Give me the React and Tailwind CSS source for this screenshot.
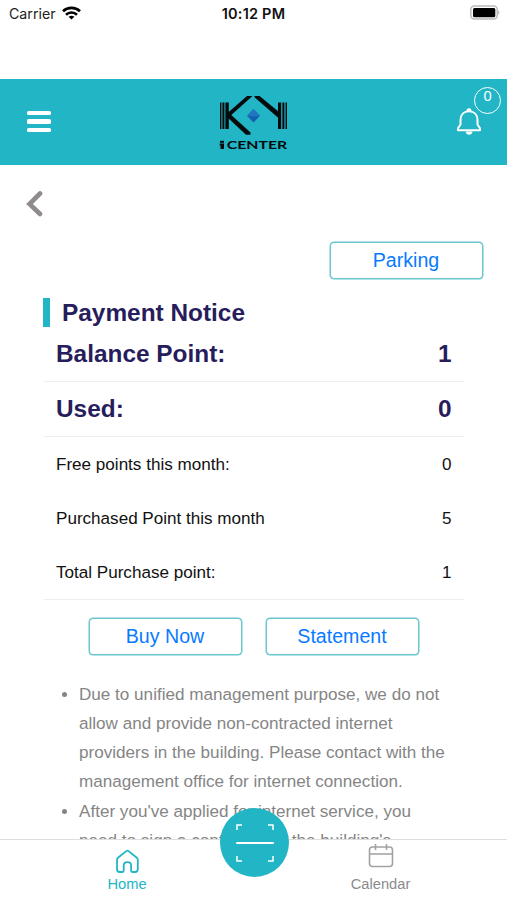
function StatusBar() {
  return (
    <div className="relative flex h-[79px] shrink-0 items-start justify-between bg-white font-['Inter',sans-serif] text-[#111]">
      <div className="flex items-center pt-[4px] pl-[9px]">
        <span className="text-[14.2px] leading-[20px] text-[#222]">Carrier</span>
        <svg className="mt-[-3px] ml-[6px]" width="19" height="14" viewBox="0 0 19 14" fill="none" stroke="#000" strokeWidth="2.6">
          <path d="M1 5.2C5.7.7 13.3.7 18 5.2" />
          <path d="M4 8.7C7 5.8 12 5.8 15 8.7" />
          <path d="M9.5 13.6 6.6 10.8Q9.5 8.5 12.4 10.8Z" fill="#000" stroke="none" />
        </svg>
      </div>
      <div className="absolute inset-x-0 top-[4px] text-center text-[14.5px] leading-[20px] font-semibold tracking-[0.2px]">10:12 PM</div>
      <svg className="mt-[5px] mr-[6px]" width="31" height="16" viewBox="0 0 31 16">
        <rect x="0.8" y="1" width="26.4" height="13" rx="3.5" fill="#fff" stroke="#bbb" strokeWidth="1.5" />
        <rect x="3" y="3" width="22.3" height="9.2" rx="1.5" fill="#000" />
        <path d="M28.3 5.3Q30.5 7.5 28.3 9.7Z" fill="#aaa" />
      </svg>
    </div>
  );
}

function Logo() {
  return (
    <svg width="70" height="58" viewBox="0 0 70 58" fill="#050b0d">
      <rect x="1" y="6.5" width="1.4" height="26.5" />
      <rect x="3.4" y="6.5" width="2" height="26.5" />
      <rect x="6.4" y="6.5" width="3.4" height="26.5" />
      <rect x="59" y="6.5" width="3.2" height="26.5" />
      <rect x="63.4" y="6.5" width="2" height="26.5" />
      <rect x="66.6" y="6.5" width="1.4" height="26.5" />
      <path d="M28 0H33.5L12.3 19 31.5 36.6V38.7H27L8 21V17.5Z" />
      <path d="M35.5 0H40.5L60 16V22.5L35.5 1.2Z" />
      <path d="M34.5 13 41 19.7 34.5 26.4 28 19.7Z" fill="#1260ad" />
      <path d="M34.5 13 41 19.7 34.5 20.5 28 19.7Z" fill="#2b83ce" opacity=".6" />
      <rect x="1" y="44.8" width="4" height="2" />
      <path d="M.7 47.6H5V53H1.5V49.4H.7Z" />
      <text x="7.8" y="53" textLength="60.4" lengthAdjust="spacingAndGlyphs" fontFamily="Lato, sans-serif" fontWeight="700" fontSize="11.3">CENTER</text>
    </svg>
  );
}

function Header() {
  return (
    <header className="flex h-[86px] shrink-0 items-start justify-between bg-[#21b5c5]">
      <div className="mt-[32px] ml-[27px] flex w-[70px] flex-col gap-[4px]">
        <span className="h-[4.4px] w-[24px] rounded-[1.5px] bg-white" />
        <span className="h-[4.4px] w-[24px] rounded-[1.5px] bg-white" />
        <span className="h-[4.4px] w-[24px] rounded-[1.5px] bg-white" />
      </div>
      <div className="mt-[17px] ml-[6px]"><Logo /></div>
      <div className="relative mt-[27px] mr-[24px] ml-[50px]">
        <svg width="28" height="32" viewBox="0 0 28 32" fill="none" stroke="#fff" strokeWidth="2" strokeLinejoin="round">
          <path d="M5.5 18.5V14C5.5 8.5 9 5.3 14 5.3S22.5 8.5 22.5 14V18.5L25 22.3V24.2H3V22.3Z" />
          <path d="M12.5 5C12.5 2.7 15.5 2.7 15.5 5" />
          <path d="M10.6 25.6H17.6Q16.8 28.8 14.1 28.8T10.6 25.6Z" fill="#fff" stroke="none" />
        </svg>
        <span className="absolute -top-[19px] left-[19px] flex h-[27px] w-[27px] justify-center rounded-full border-[1.5px] border-white font-['Liberation_Sans',sans-serif] text-[14.7px] leading-[17px] text-white">0</span>
      </div>
    </header>
  );
}

function OutlineButton({ children }) {
  return (
    <button className="flex h-[37px] w-[153px] items-center justify-center rounded-[4px] border-[1.5px] border-[#69c8cf] bg-white pb-[2px] text-[19.6px] leading-[24px] text-[#087aff] shadow-[0_0_0_0.5px_#69c8cf]">
      {children}
    </button>
  );
}

function PointRow({ label, value }) {
  return (
    <div className="flex h-[54px] items-center justify-between pt-[2px] pr-[12.5px] pl-[12px] text-[17.1px] text-[#111]">
      <span className="tracking-[-0.01px]">{label}</span>
      <span>{value}</span>
    </div>
  );
}

function BottomNav() {
  return (
    <nav className="absolute inset-x-0 bottom-0 flex h-[61px] justify-between border-t border-[#dedede] bg-white text-[14.7px] leading-[18px]">
      <div className="flex w-[254px] flex-col items-center pt-[9px] text-[#21b5c5]">
        <svg width="26" height="26" viewBox="0 0 26 26" fill="none" stroke="currentColor" strokeWidth="1.8" strokeLinejoin="round">
          <path d="M3 10.8Q3 9.6 4 8.8L12.2 2.1Q13.3 1.1 14.6 2.1L22.8 8.8Q23.8 9.6 23.8 10.8V20.3Q23.8 23 21.1 23H18.3Q17.1 23 17.1 21.8V16.5Q17.1 13.2 13.4 13.2T9.7 16.5V21.8Q9.7 23 8.5 23H5.7Q3 23 3 20.3Z" />
        </svg>
        <span>Home</span>
      </div>
      <div className="flex w-[253px] flex-col items-center pt-[3px] text-[#8b8b8b]">
        <svg width="26" height="26" viewBox="0 0 26 26" fill="none" stroke="#a0a3a3" strokeWidth="1.6">
          <rect x="1.5" y="4" width="23" height="19.5" rx="3" />
          <path d="M1.5 11H24.5M7.5 1V7M18.5 1V7" />
        </svg>
        <span className="mt-[6px]">Calendar</span>
      </div>
      <button className="absolute -top-[32px] left-[220px] flex h-[69px] w-[69px] items-center justify-center rounded-full bg-[#21b5c5]">
        <svg width="40" height="40" viewBox="0 0 40 40" fill="none" stroke="#fff" strokeWidth="1.5">
          <path d="M2 7V2H7M33 2H38V7M38 33V38H33M7 38H2V33" />
          <path d="M1.2 20H38.8" strokeWidth="2" />
        </svg>
      </button>
    </nav>
  );
}

export default function App() {
  return (
    <div className="relative flex h-[900px] w-[507px] flex-col overflow-hidden bg-white font-['Liberation_Sans',Arial,sans-serif]">
      <StatusBar />
      <Header />
      <main className="flex flex-col">
        <svg className="mt-[25px] ml-[26px]" width="18" height="27" viewBox="0 0 18 27" fill="none" stroke="#918c8c" strokeWidth="4.6" strokeLinecap="round">
          <path d="M14 3.5 3.5 14 14 24" />
        </svg>
        <div className="mt-[25px] flex justify-end pr-[24.5px]"><OutlineButton>Parking</OutlineButton></div>
        <section className="mt-[19px] ml-[43px] w-[421px] text-[#271d5c]">
          <h1 className="flex h-[29px] items-center border-l-[7px] border-[#21b5c5] pt-[1px] pl-[12px] text-[24.4px] font-bold">Payment Notice</h1>
          <div className="ml-[1px]">
            <div className="flex h-[55px] items-center justify-between border-b border-[#eee] px-[12.5px] pt-[1px] pl-[12px] text-[24.4px] font-bold">
              <span>Balance Point:</span><span>1</span>
            </div>
            <div className="flex h-[55px] items-center justify-between border-b border-[#eee] px-[12.5px] pt-[1px] pl-[12px] text-[24.4px] font-bold">
              <span>Used:</span><span>0</span>
            </div>
            <div className="border-b border-[#eee]">
              <PointRow label="Free points this month:" value="0" />
              <PointRow label="Purchased Point this month" value="5" />
              <PointRow label="Total Purchase point:" value="1" />
            </div>
          </div>
        </section>
        <div className="mt-[18px] flex justify-center gap-[24px]">
          <OutlineButton>Buy Now</OutlineButton>
          <OutlineButton>Statement</OutlineButton>
        </div>
        <ul className="mt-[24.5px] ml-[79px] w-[380px] list-disc text-[17.1px] leading-[29.3px] text-[#858585]">
          <li>Due to unified management purpose, we do not<br />allow and provide non-contracted internet<br />providers in the building. Please contact with the<br />management office for internet connection.</li>
          <li>After you've applied for internet service, you<br />need to sign a contract with the building's</li>
        </ul>
      </main>
      <BottomNav />
    </div>
  );
}
